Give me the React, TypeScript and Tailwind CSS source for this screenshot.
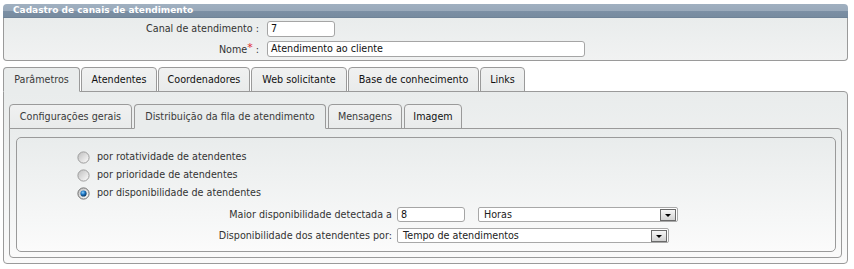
import React from 'react';

const outerTabs = [
  { label: 'Parâmetros', w: 'w-[77px]', active: true, dark: false },
  { label: 'Atendentes', w: 'w-[76px]', active: false, dark: true },
  { label: 'Coordenadores', w: 'w-[92px]', active: false, dark: true },
  { label: 'Web solicitante', w: 'w-[96px]', active: false, dark: true },
  { label: 'Base de conhecimento', w: 'w-[131px]', active: false, dark: true },
  { label: 'Links', w: 'w-[45px]', active: false, dark: true },
];

const innerTabs = [
  { label: 'Configurações gerais', w: 'w-[123px]', active: false, dark: false },
  { label: 'Distribuição da fila de atendimento', w: 'w-[192px]', active: true, dark: false },
  { label: 'Mensagens', w: 'w-[74px]', active: false, dark: false },
  { label: 'Imagem', w: 'w-[58px]', active: false, dark: true },
];

type Tab = { label: string; w: string; active: boolean; dark: boolean };

function TabRow({ tabs, gap }: { tabs: Tab[]; gap: string }) {
  return (
    <div className={`relative z-10 -mb-px flex items-end ${gap}`}>
      {tabs.map((t) => (
        <div
          key={t.label}
          className={`${t.w} h-[25px] flex items-center justify-center rounded-t-[4px] border border-[#9a9a9a] ${
            t.active
              ? 'bg-[#e9ecec] border-b-[#e9ecec]'
              : 'bg-gradient-to-b from-[#f0f1f1] to-[#e9ebeb]'
          } ${t.dark ? 'text-[#111]' : 'text-[#3a3a3a]'}`}
        >
          {t.label}
        </div>
      ))}
    </div>
  );
}

function Radio({ checked }: { checked?: boolean }) {
  return (
    <svg width="13" height="13" viewBox="0 0 13 13" className="shrink-0">
      <defs>
        <linearGradient id="ring" x1="0" y1="0" x2="1" y2="1">
          <stop offset="0" stopColor="#bdbdbd" />
          <stop offset="1" stopColor="#ffffff" />
        </linearGradient>
        <radialGradient id="dot" cx="0.4" cy="0.35" r="0.65">
          <stop offset="0" stopColor="#8fd2ff" />
          <stop offset="0.5" stopColor="#1f77c4" />
          <stop offset="1" stopColor="#0a355f" />
        </radialGradient>
      </defs>
      <circle cx="6.5" cy="6.5" r="5.6" fill="url(#ring)" stroke={checked ? '#6e6e6e' : '#9c9c9c'} />
      {checked && <circle cx="6.5" cy="6.5" r="3.1" fill="url(#dot)" />}
    </svg>
  );
}

function Select({ value, w }: { value: string; w: string }) {
  return (
    <div className={`${w} h-[15px] flex items-center bg-white border border-[#a8a8a8] rounded-[2px] pl-[5px] pr-px`}>
      <span className="flex-1 leading-none text-[#222]">{value}</span>
      <span className="w-[16px] h-[12px] flex items-center justify-center border border-[#6a6a6a] bg-gradient-to-b from-[#f6f6f6] to-[#d2d2d2]">
        <span className="mt-[2px] border-x-[3px] border-x-transparent border-t-[3px] border-t-black" />
      </span>
    </div>
  );
}

function Input({ value, w, h = 'h-[16px]' }: { value: string; w: string; h?: string }) {
  return (
    <div className={`${w} ${h} flex items-center bg-white border border-[#a5a5a5] rounded-[3px] pl-[3px] text-[#111]`}>
      {value}
    </div>
  );
}

export default function App() {
  return (
    <div className="w-[854px] h-[269px] bg-white pt-[4px] pl-[3px] font-['DejaVu_Sans',Verdana,sans-serif] text-[9.6px] text-[#333] leading-none">
      <div className="w-[845px]">
        {/* header */}
        <div className="h-[14px] flex items-center rounded-t-[4px] pl-[10px] border-b border-[#6f8397] bg-[linear-gradient(#a0b0c0,#9aaabb_52%,#7b8fa4_56%,#778b9f)] text-white font-bold text-[9px]">
          Cadastro de canais de atendimento
        </div>
        <div className="border-x border-b border-[#9a9a9a] rounded-b-[4px] bg-gradient-to-b from-[#e9ecec] to-[#f1f2f2] pt-[3px] pb-[3px]">
          <div className="grid grid-cols-[255px_auto] gap-x-[8px] gap-y-[4px] items-center">
            <div className="text-right">Canal de atendimento :</div>
            <Input value="7" w="w-[68px]" />
            <div className="text-right">
              Nome<span className="text-[#e0262a] text-[11px] relative -top-[2px]">*</span> :
            </div>
            <Input value="Atendimento ao cliente" w="w-[318px]" />
          </div>
        </div>

        {/* outer tabs */}
        <div className="mt-[6px]">
          <TabRow tabs={outerTabs} gap="gap-px" />
          <div className="border border-[#9a9a9a] rounded-b-[4px] rounded-tr-[4px] bg-gradient-to-b from-[#e9ecec] to-[#fafafa] pt-[12px] pl-[5px] pr-[5px] pb-[5px]">
            <TabRow tabs={innerTabs} gap="gap-[2px]" />
            <div className="border border-[#9a9a9a] rounded-b-[4px] rounded-tr-[4px] bg-gradient-to-b from-[#e9ecec] to-[#fafafa] pt-[8px] pl-[6px] pr-[5px] pb-[5px]">
              <div className="border border-[#9a9a9a] rounded-[5px] bg-gradient-to-b from-[#e9ecec] to-[#fbfbfb] pt-[10px] pb-[8px]">
                <div className="pl-[60px] flex flex-col">
                  {[
                    ['por rotatividade de atendentes', false],
                    ['por prioridade de atendentes', false],
                    ['por disponibilidade de atendentes', true],
                  ].map(([label, checked]) => (
                    <div key={label as string} className="h-[18px] flex items-center gap-[7px]">
                      <Radio checked={checked as boolean} />
                      <span>{label as string}</span>
                    </div>
                  ))}
                </div>
                <div className="mt-[5px] grid grid-cols-[375px_auto] gap-x-[5px] gap-y-[6px] items-center">
                  <div className="text-right">Maior disponibilidade detectada a</div>
                  <div className="flex items-center gap-[13px]">
                    <Input value="8" w="w-[68px]" h="h-[15px]" />
                    <Select value="Horas" w="w-[200px]" />
                  </div>
                  <div className="text-right">Disponibilidade dos atendentes por:</div>
                  <Select value="Tempo de atendimentos" w="w-[272px]" />
                </div>
              </div>
            </div>
          </div>
        </div>
      </div>
    </div>
  );
}
